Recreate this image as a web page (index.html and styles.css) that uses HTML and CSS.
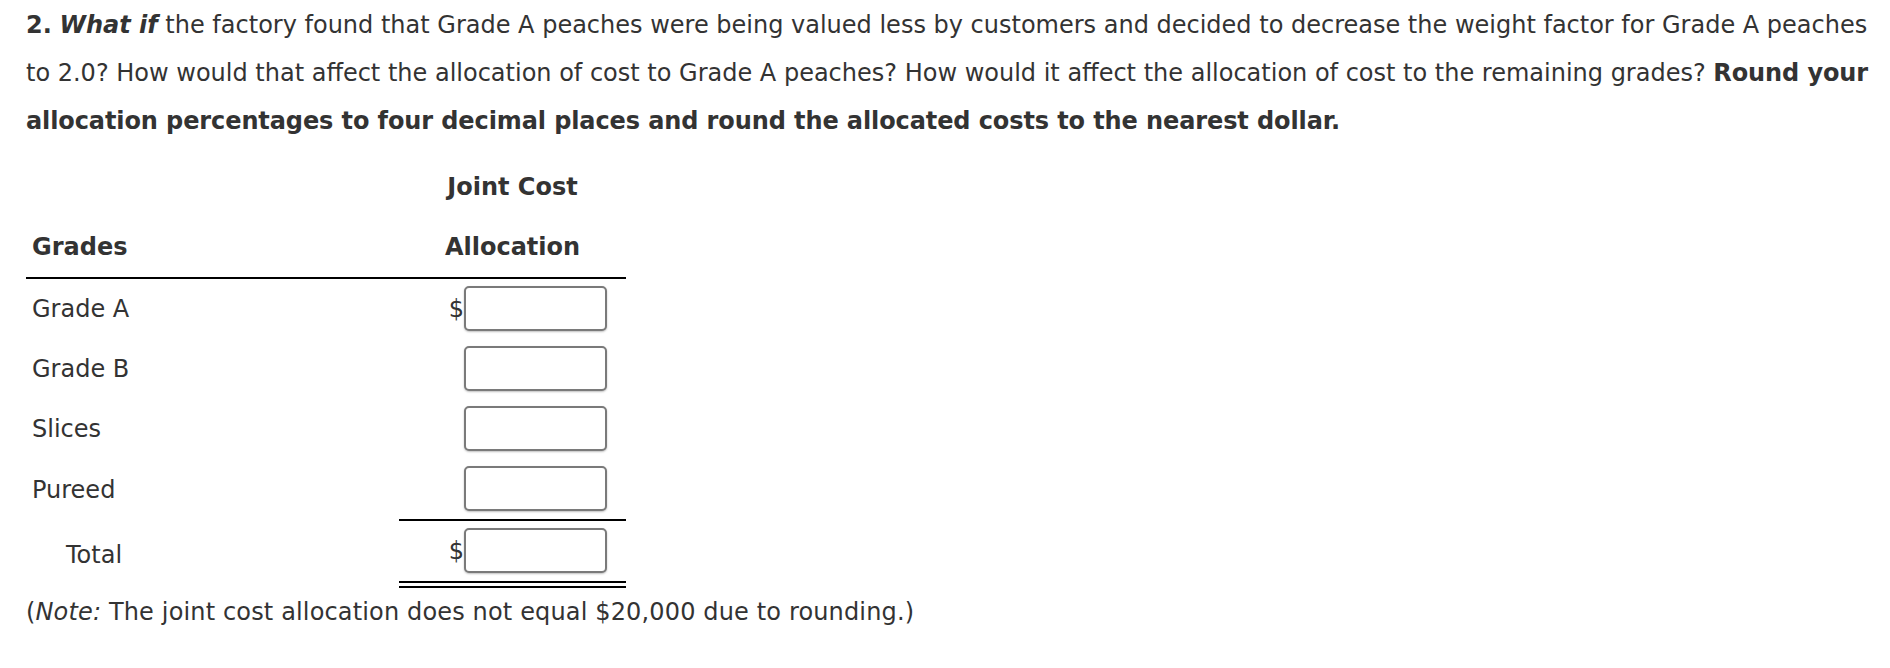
FILE: index.html
```html
<!DOCTYPE html>
<html lang="en">
<head>
<meta charset="utf-8">
<title>Joint Cost Allocation</title>
<link rel="stylesheet" href="styles.css">
</head>
<body>
<div class="page">
  <p class="question"><b>2.</b> <b><i>What if</i></b> the factory found that Grade A peaches were being valued less by customers and decided to decrease the weight factor for Grade A peaches to 2.0? How would that affect the allocation of cost to Grade A peaches? How would it affect the allocation of cost to the remaining grades? <b class="instr">Round your allocation percentages to four decimal places and round the allocated costs to the nearest dollar.</b></p>
  <table class="alloc">
    <colgroup>
      <col class="c-label">
      <col class="c-sign">
      <col class="c-input">
    </colgroup>
    <thead>
      <tr>
        <th class="h-label"></th>
        <th class="h-amount" colspan="2">Joint Cost</th>
      </tr>
      <tr class="rule">
        <th class="h-label">Grades</th>
        <th class="h-amount" colspan="2">Allocation</th>
      </tr>
    </thead>
    <tbody>
      <tr>
        <td class="label">Grade A</td>
        <td class="sign">$</td>
        <td class="field"><input class="box" type="text" aria-label="Grade A allocation"></td>
      </tr>
      <tr>
        <td class="label">Grade B</td>
        <td class="sign"></td>
        <td class="field"><input class="box" type="text" aria-label="Grade B allocation"></td>
      </tr>
      <tr>
        <td class="label">Slices</td>
        <td class="sign"></td>
        <td class="field"><input class="box" type="text" aria-label="Slices allocation"></td>
      </tr>
      <tr class="subtotal">
        <td class="label">Pureed</td>
        <td class="sign"></td>
        <td class="field"><input class="box" type="text" aria-label="Pureed allocation"></td>
      </tr>
      <tr class="total">
        <td class="label indent">Total</td>
        <td class="sign">$</td>
        <td class="field"><input class="box" type="text" aria-label="Total allocation"></td>
      </tr>
    </tbody>
  </table>
  <p class="note">(<i>Note:</i> The joint cost allocation does not equal $20,000 due to rounding.)</p>
</div>
</body>
</html>
```

FILE: styles.css
```css
html, body {
  margin: 0;
  padding: 0;
  background: #ffffff;
}

body {
  font-family: "DejaVu Sans", Verdana, sans-serif;
  font-size: 24px;
  line-height: 48px;
  color: #333333;
}

.page {
  padding: 1px 8px 0 26px;
}

.question {
  margin: 0;
}

.question .instr {
  letter-spacing: -0.1px;
}

.alloc {
  margin-top: 12px;
  border-collapse: separate;
  border-spacing: 0;
  width: 600px;
  table-layout: fixed;
}

.c-label { width: 373px; }
.c-sign { width: 65px; }
.c-input { width: 162px; }

.alloc th,
.alloc td {
  padding: 0;
  height: 60px;
  line-height: 60px;
  vertical-align: middle;
}

.alloc th {
  font-weight: bold;
}

.h-label {
  text-align: left;
  padding-left: 6px !important;
}

.h-amount {
  text-align: center;
}

.rule th {
  border-bottom: 2px solid #000000;
}

.label {
  text-align: left;
  padding-left: 6px !important;
}

.label.indent {
  padding-left: 40px !important;
}

.sign {
  text-align: right;
}

.field {
  text-align: left;
}

.box {
  display: block;
  box-sizing: border-box;
  width: 143px;
  height: 45px;
  margin: 0 0 2px 0;
  padding: 0 6px;
  border: 2px solid #7a7a7a;
  border-radius: 5px;
  background: #ffffff;
  box-shadow: 0 1px 2px rgba(0, 0, 0, 0.25);
  font: inherit;
}

.subtotal .sign,
.subtotal .field {
  border-bottom: 2px solid #000000;
}

.total .sign,
.total .field {
  border-bottom: 7px double #000000;
}

.note {
  margin: 0;
  letter-spacing: 0.15px;
}
```
